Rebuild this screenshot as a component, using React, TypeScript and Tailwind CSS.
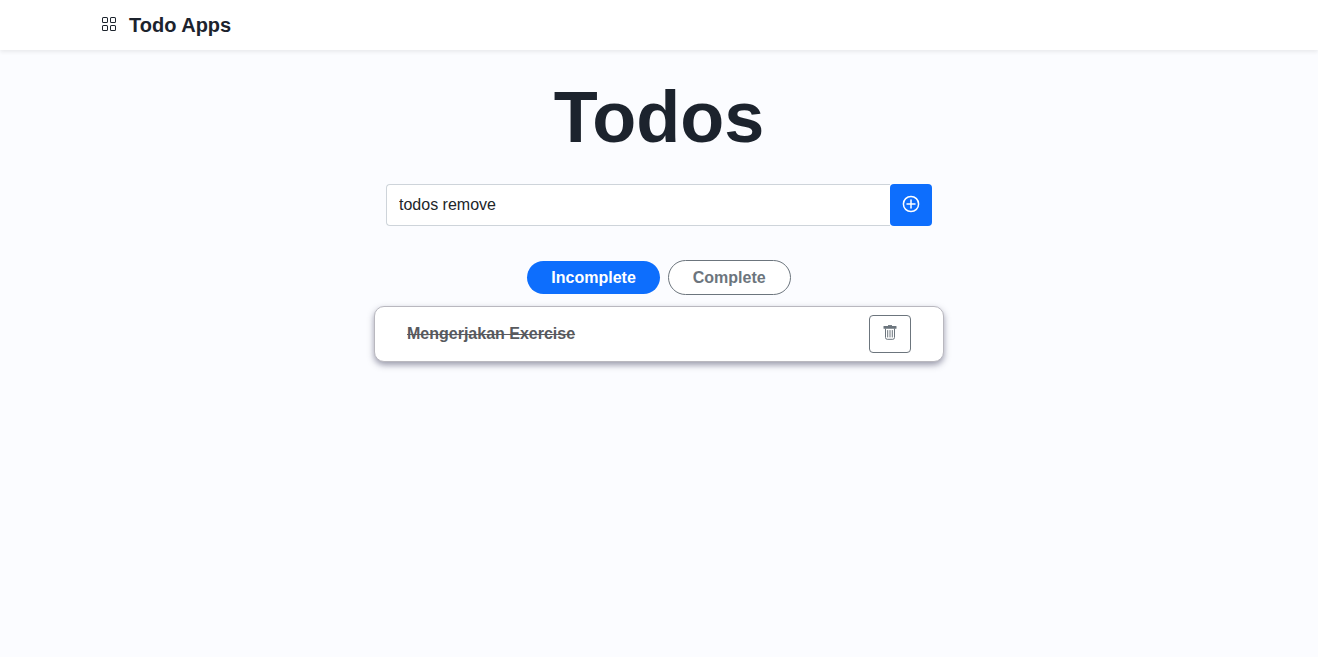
import { useState } from "react";
import { BsGrid } from "react-icons/bs";

function PlusCircleIcon() {
  return (
    <svg viewBox="0 0 18 18" className="size-[18px]" fill="none" stroke="currentColor" aria-hidden="true">
      <circle cx="9" cy="9" r="7.6" strokeWidth="1.5" />
      <path d="M9 5v8M5 9h8" strokeWidth="1.5" strokeLinecap="round" />
    </svg>
  );
}

function TrashIcon() {
  return (
    <svg viewBox="0 0 16 16" className="size-4" fill="none" stroke="currentColor" aria-hidden="true">
      <path d="M6 0.6h4" />
      <rect x="1.5" y="1" width="13" height="2.8" rx="0.6" fill="currentColor" stroke="none" />
      <path d="M3.5 3.5v9a1.8 1.8 0 0 0 1.8 1.8h5.4a1.8 1.8 0 0 0 1.8-1.8v-9" />
      <path d="M5.7 5.5v6.5M8 5.5v6.5M10.3 5.5v6.5" strokeLinecap="round" />
    </svg>
  );
}

export default function App() {
  const [draft, setDraft] = useState("todos remove");

  return (
    <div className="min-h-screen bg-[#fbfcff] font-['Liberation_Sans',Arial,sans-serif] text-base text-[#1c232d]">
      <header className="bg-white shadow-[0_2px_4px_rgba(0,0,0,0.075)]">
        <div className="mx-auto flex h-[50px] max-w-[1140px] items-center gap-3 px-3">
          <BsGrid className="-mt-0.5 size-4" aria-hidden="true" />
          <a href="#" className="text-xl font-bold">
            Todo Apps
          </a>
        </div>
      </header>

      <main className="mx-auto flex max-w-[570px] flex-col pt-[22px]">
        <h1 className="text-center text-7xl leading-[90px] font-bold">Todos</h1>

        <form className="mt-[22px] flex px-3" onSubmit={(event) => event.preventDefault()}>
          <input
            type="text"
            aria-label="New todo"
            value={draft}
            onChange={(event) => setDraft(event.target.value)}
            className="h-[42px] min-w-0 flex-1 rounded-l border border-r-0 border-[#ced4da] bg-white px-3 text-[#212529] outline-none"
          />
          <button
            type="submit"
            aria-label="Add todo"
            className="flex h-[42px] w-[42px] items-center justify-center rounded bg-[#0d6efd] pb-0.5 text-white"
          >
            <PlusCircleIcon />
          </button>
        </form>

        <div className="mt-[34px] flex items-center justify-center gap-2 font-bold">
          <button type="button" className="h-[33px] rounded-full bg-[#0d6efd] px-6 text-white">
            Incomplete
          </button>
          <button
            type="button"
            className="h-[35px] rounded-full border border-[#6c757d] bg-white px-6 text-[#6c757d]"
          >
            Complete
          </button>
        </div>

        <ul className="mt-[11px]">
          <li className="flex h-14 items-center justify-between rounded-[10px] border border-[#b9b8bf] bg-white px-8 shadow-[0_3px_6px_rgba(60,60,90,0.5)]">
            <span className="font-bold text-[#585a5e] line-through">Mengerjakan Exercise</span>
            <button
              type="button"
              aria-label="Delete Mengerjakan Exercise"
              className="flex h-[38px] w-[42px] items-center justify-center rounded border border-[#6c757d] pb-0.5 text-[#6c757d]"
            >
              <TrashIcon />
            </button>
          </li>
        </ul>
      </main>
    </div>
  );
}
